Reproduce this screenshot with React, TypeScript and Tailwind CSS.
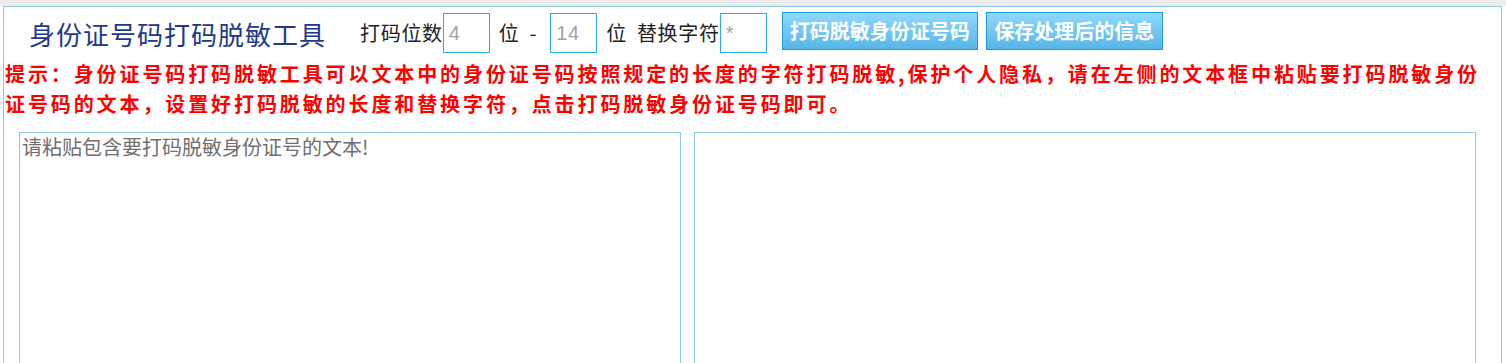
import { useState } from "react";

const cjk = "font-['Noto_Sans_CJK_SC','Noto_Sans',sans-serif]";

function DigitInput({ value, onChange }: { value: string; onChange: (v: string) => void }) {
	return (
		<input
			value={value}
			onChange={(e) => onChange(e.target.value)}
			className="h-[40px] w-[47px] border border-[#22aee6] bg-white pl-[5px] font-['Liberation_Sans',Arial,sans-serif] text-[20px] text-[#a3a3a3] outline-none"
		/>
	);
}

export default function App() {
	const [start, setStart] = useState("4");
	const [end, setEnd] = useState("14");
	const [mask, setMask] = useState("*");
	const [input, setInput] = useState("");
	const [output, setOutput] = useState("");

	return (
		<div className={`min-h-[363px] bg-white ${cjk}`}>
			<div className="h-[6px] bg-[#ededed]" />
			<div className="ml-[3px] w-[1499px] border border-b-0 border-[#8ecae0] pt-[6px] pb-0">
				{/* Toolbar */}
				<div className="flex h-[40px] items-center text-[20px] tracking-[0.7px] text-[#222]">
					<h1 className="ml-[25px] text-[26px] font-normal tracking-[1px] text-[#21398a]">
						身份证号码打码脱敏工具
					</h1>
					<span className="ml-[34px]">打码位数</span>
					<DigitInput value={start} onChange={setStart} />
					<span className="ml-[9px]">位</span>
					<span className="ml-[10px]">-</span>
					<span className="ml-[13px]" />
					<DigitInput value={end} onChange={setEnd} />
					<span className="ml-[9px]">位</span>
					<span className="ml-[10px]">替换字符</span>
					<DigitInput value={mask} onChange={setMask} />
					<button className="mb-[4px] ml-[15px] h-[38px] w-[196px] border border-[#1c9bd8] bg-gradient-to-b from-[#90d8fc] to-[#56b5e8] text-[20px] font-bold tracking-normal text-white">
						打码脱敏身份证号码
					</button>
					<button className="mb-[4px] ml-[8px] h-[38px] w-[177px] border border-[#1c9bd8] bg-gradient-to-b from-[#90d8fc] to-[#56b5e8] text-[20px] font-bold tracking-normal text-white">
						保存处理后的信息
					</button>
				</div>

				{/* Hint */}
				<p className="mt-[6px] pr-[10px] pl-[1px] text-[20px] leading-[30px] font-bold tracking-[2.9px] text-[#ff0000]">
					提示：身份证号码打码脱敏工具可以文本中的身份证号码按照规定的长度的字符打码脱敏,保护个人隐私，请在左侧的文本框中粘贴要打码脱敏身份证号码的文本，设置好打码脱敏的长度和替换字符，点击打码脱敏身份证号码即可。
				</p>

				{/* Text areas */}
				<div className="mt-[13px] ml-[15px] flex gap-[13px]">
					<textarea
						value={input}
						onChange={(e) => setInput(e.target.value)}
						placeholder="请粘贴包含要打码脱敏身份证号的文本!"
						className="h-[240px] w-[662px] resize-none border border-[#8ecae0] px-[2px] pt-[2px] text-[20px] leading-[24px] text-[#333] outline-none placeholder:text-[#6f6f6f]"
					/>
					<textarea
						value={output}
						onChange={(e) => setOutput(e.target.value)}
						className="h-[240px] w-[782px] resize-none border border-[#8ecae0] px-[2px] pt-[2px] text-[20px] leading-[24px] text-[#333] outline-none"
					/>
				</div>
			</div>
		</div>
	);
}
